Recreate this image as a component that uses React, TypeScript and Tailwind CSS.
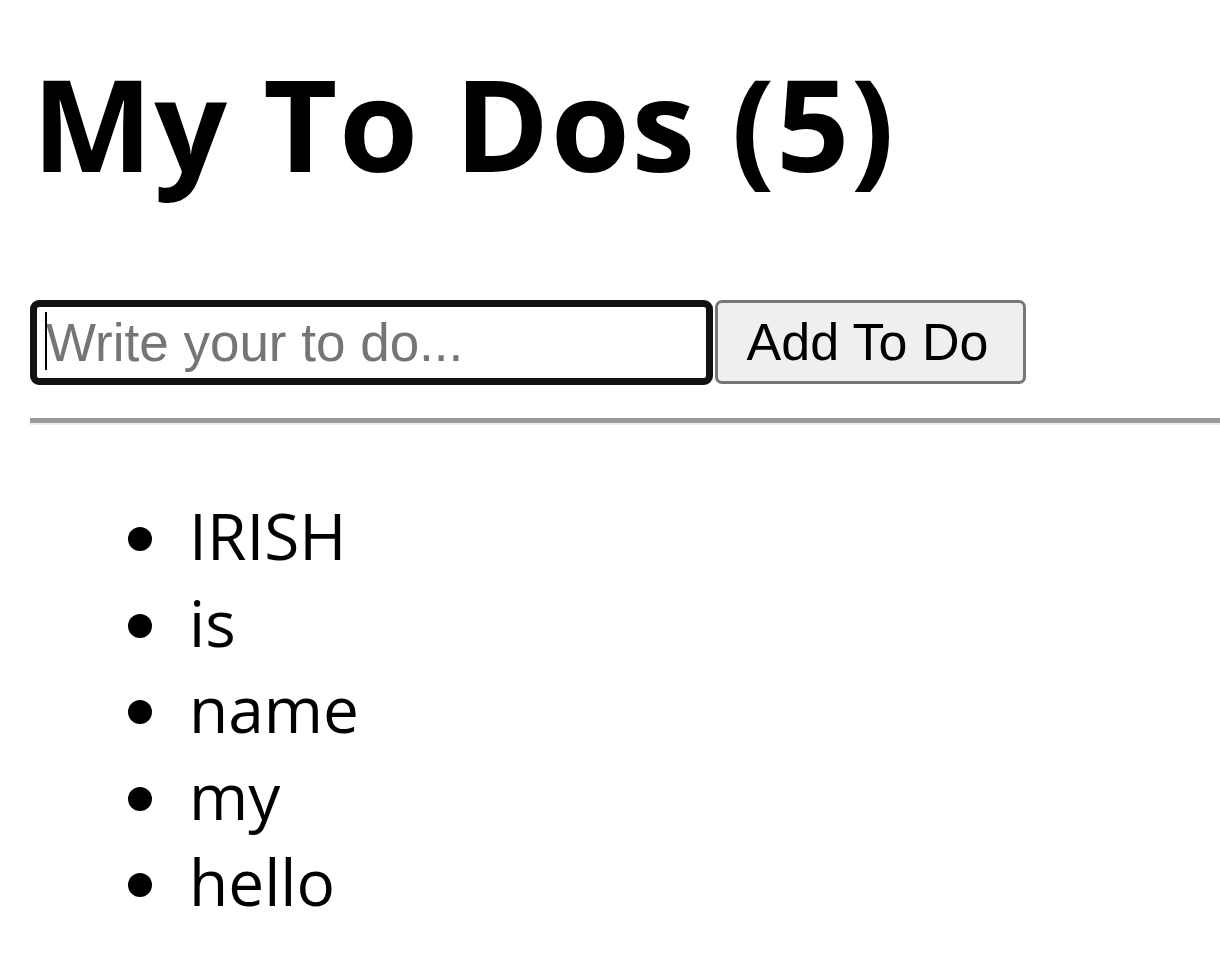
import { useState } from "react";

const initialTodos = ["IRISH", "is", "name", "my", "hello"];

export default function App() {
  const [todo, setTodo] = useState("");
  const [todos, setTodos] = useState<string[]>(initialTodos);

  const onSubmit = (e: React.FormEvent) => {
    e.preventDefault();
    if (todo === "") return;
    setTodos((current) => [todo, ...current]);
    setTodo("");
  };

  return (
    <div
      className="min-h-screen bg-white pl-[30px] text-black overflow-hidden"
      style={{ fontFamily: '"Open Sans", "Noto Sans", sans-serif' }}
    >
      <h1 className="m-0 mt-[36px] pl-[2px] text-[128px] font-bold leading-[174px] tracking-[1.5px] whitespace-nowrap">
        My To Dos ({todos.length})
      </h1>

      <form onSubmit={onSubmit} className="mt-[90px] flex items-start">
        <div className="relative">
          <input
            value={todo}
            onChange={(e) => setTodo(e.target.value)}
            type="text"
            placeholder="Write your to do..."
            className="w-[683px] h-[85px] border-[7px] border-[#111] rounded-[9px] bg-white pl-[9px] text-[53px] text-black placeholder:text-[#757575] outline-none caret-transparent"
            style={{ fontFamily: '"Liberation Sans", Arial, sans-serif' }}
          />
          {/* caret of the focused field */}
          <span className="absolute left-[15px] top-[12px] w-[2px] h-[58px] bg-black" />
        </div>
        <button
          className="ml-[2px] w-[311px] h-[84px] bg-[#efefef] border-[3px] border-[#767676] rounded-[7px] pr-[6px] text-[52px] text-black leading-none"
          style={{ fontFamily: '"Liberation Sans", Arial, sans-serif' }}
        >
          Add To Do
        </button>
      </form>

      <div className="mt-[33px] border-t-[5px] border-[#9a9a9a] border-b-[2px] border-b-[#ececec]" />

      <ul className="mt-[68px] pl-[98px]">
        {todos.map((item, index) => (
          <li key={index} className="flex items-start text-[64px] leading-[86.5px]">
            <span className="mt-[34px] w-[24px] h-[24px] rounded-full bg-black shrink-0" />
            <span className="ml-[37px]">{item}</span>
          </li>
        ))}
      </ul>
    </div>
  );
}
